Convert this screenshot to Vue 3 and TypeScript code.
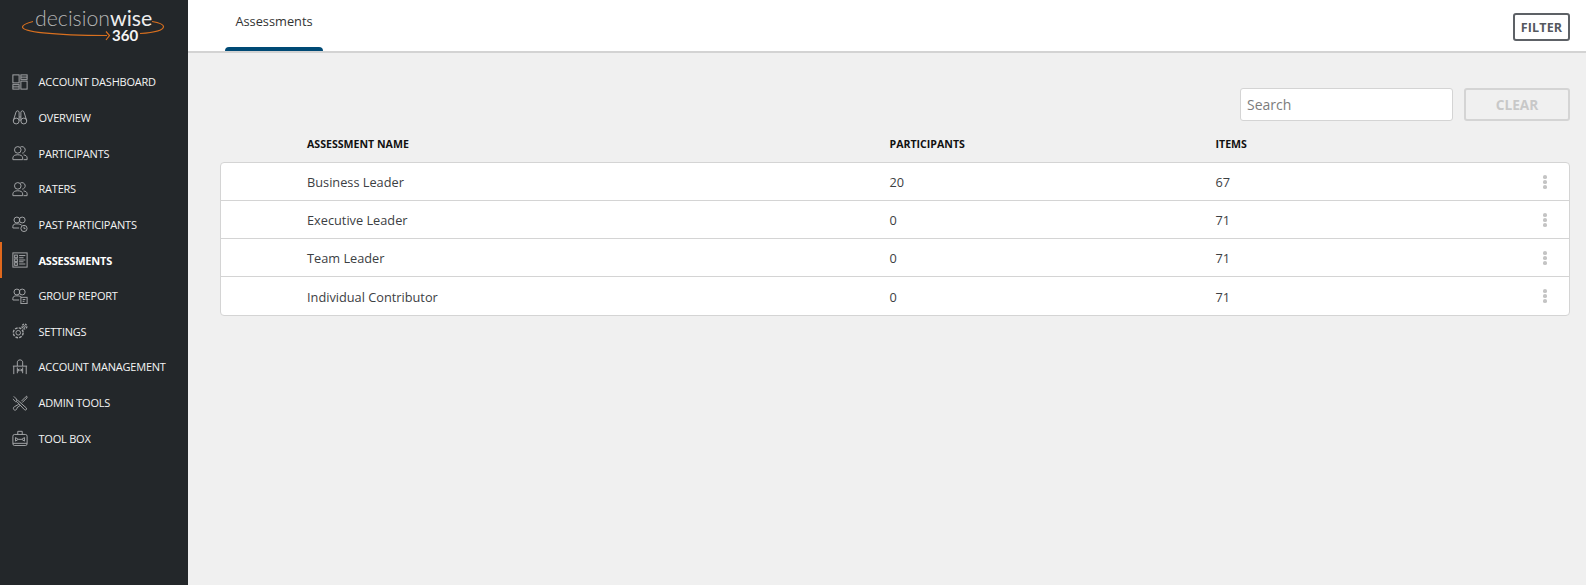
<script setup lang="ts">
interface NavItem { label: string; icon: string; active?: boolean }
const nav: NavItem[] = [
  { label: 'ACCOUNT DASHBOARD', icon: 'dash' },
  { label: 'OVERVIEW', icon: 'binoc' },
  { label: 'PARTICIPANTS', icon: 'people' },
  { label: 'RATERS', icon: 'people' },
  { label: 'PAST PARTICIPANTS', icon: 'past' },
  { label: 'ASSESSMENTS', icon: 'assess', active: true },
  { label: 'GROUP REPORT', icon: 'group' },
  { label: 'SETTINGS', icon: 'gear' },
  { label: 'ACCOUNT MANAGEMENT', icon: 'manage' },
  { label: 'ADMIN TOOLS', icon: 'tools' },
  { label: 'TOOL BOX', icon: 'box' },
]
const rows = [
  { name: 'Business Leader', participants: 20, items: 67 },
  { name: 'Executive Leader', participants: 0, items: 71 },
  { name: 'Team Leader', participants: 0, items: 71 },
  { name: 'Individual Contributor', participants: 0, items: 71 },
]
</script>

<template>
  <div class="app">
    <aside class="side">
      <svg class="logo" width="188" height="44" viewBox="0 0 188 44">
        <path d="M33 21.500C27 23 22.500 24.500 22.500 27C22.500 31.500 50 35.500 107 35.500" fill="none" stroke="#d9701f" stroke-width="1.200" />
        <path d="M106 31.500L109.500 35.500L106 40" fill="none" stroke="#d9701f" stroke-width="1.200" />
        <path d="M140 33.500C155 32.500 163.500 30 163.500 26.500C163.500 24.500 158 22.500 152 21.500" fill="none" stroke="#d9701f" stroke-width="1.200" />
        <text x="35" y="26" class="logo-a">decision<tspan class="logo-b">wise</tspan></text>
        <text x="112" y="41" class="logo-c">360</text>
      </svg>
      <nav class="nav">
        <a v-for="n in nav" :key="n.label" class="nav-item" :class="{ active: n.active }">
          <svg class="ico" width="16" height="16" viewBox="0 0 18 18">
            <g v-if="n.icon === 'dash'">
              <rect x="1" y="1" width="7" height="9" /><rect x="10" y="1" width="7" height="5" /><rect x="10" y="8" width="7" height="9" /><rect x="1" y="12" width="7" height="5" />
              <path d="M1 14.500h7M10 3.500h7" />
            </g>
            <g v-else-if="n.icon === 'binoc'">
              <circle cx="4.700" cy="13.500" r="3.300" /><circle cx="13.300" cy="13.500" r="3.300" />
              <path d="M1.500 13L4.500 3.500C5 1.500 7.500 1.500 8 3.500V12M16.500 13L13.500 3.500C13 1.500 10.500 1.500 10 3.500V12M8 9h2M8 12.500h2" />
            </g>
            <g v-else-if="n.icon === 'people'">
              <circle cx="6.500" cy="5.500" r="3.700" /><path d="M1 16.500V14.500C1 12 3.500 11 6.500 11S12 12 12 14.500V16.500Z" />
              <path d="M9.500 2.200A3.700 3.700 0 1 1 11.500 9.200M13 11.200C15.500 11.500 17 12.500 17 14.500V16.500H13" />
            </g>
            <g v-else-if="n.icon === 'past'">
              <circle cx="5.500" cy="4.500" r="3.300" /><circle cx="11.500" cy="4.500" r="3.300" />
              <path d="M1 13.500V11.500C1 9.500 3 8.800 5.500 8.800S10 9.500 11 10.500M1 13.500H8" />
              <circle cx="13.500" cy="14" r="3.500" /><path d="M13.500 12v2.200h1.700" />
            </g>
            <g v-else-if="n.icon === 'assess'">
              <rect x="1" y="1" width="16" height="16" />
              <rect x="3" y="3.500" width="3" height="3" /><rect x="3" y="7.800" width="3" height="3" /><rect x="3" y="12" width="3" height="3" />
              <path d="M8 4h7M8 6.500h5M8 9h7M8 11h5M8 13.500h7" />
            </g>
            <g v-else-if="n.icon === 'group'">
              <circle cx="5.500" cy="4.500" r="3.300" /><circle cx="11.500" cy="4.500" r="3.300" />
              <path d="M1 13.500V11.500C1 9.500 3 8.800 5.500 8.800S10 9.500 10.500 10M1 13.500H8" />
              <rect x="10" y="10.500" width="7" height="7" /><path d="M12 13h3M12 15h2" />
            </g>
            <g v-else-if="n.icon === 'gear'">
              <circle cx="7" cy="11" r="5.500" stroke-dasharray="3 1.300" stroke-width="1.600" /><circle cx="7" cy="11" r="2.600" />
              <circle cx="14" cy="4" r="2.700" stroke-dasharray="2 1" stroke-width="1.500" /><circle cx="14" cy="4" r="1" />
            </g>
            <g v-else-if="n.icon === 'manage'">
              <path d="M1 8H17M2 8V17M16 8V17M6 8V3.500C6 2 7.500 1 9 1S12 2 12 3.500V8M6 9.500V16M12 9.500V16M6 12.500H12M8 11L6.500 12.500L8 14M10 11L11.500 12.500L10 14" />
            </g>
            <g v-else-if="n.icon === 'tools'">
              <path d="M2 1.500L5 4.500V6L6.500 6L16 14.500C17.200 16 15.500 17.800 14 16.500L5.500 7.500H4L1 4.500" />
              <path d="M10.500 7L15 2.500L16.500 1.200L17 3.200L15.500 4.500L11.500 8.500" />
              <path d="M7.500 10.500L3 13C1.200 13.500 1 16.500 3 17C5 17.300 5.800 15.500 5.500 14.500L9 11.800" />
            </g>
            <g v-else>
              <rect x="1" y="5" width="16" height="12.500" rx="2" />
              <path d="M6.500 5V1.500H11.500V5" />
              <path d="M4 8.500L7 10.500L4 12.500ZM14 8.500L11 10.500L14 12.500ZM7 10.500H11M1 15H17" />
            </g>
          </svg>
          <span class="nav-label">{{ n.label }}</span>
        </a>
      </nav>
    </aside>
    <main class="main">
      <header class="top">
        <div class="tab">Assessments</div>
        <button class="filter" type="button">FILTER</button>
      </header>
      <section class="content">
        <div class="tools">
          <input class="search" placeholder="Search" />
          <button class="clear" type="button" disabled>CLEAR</button>
        </div>
        <div class="head grid">
          <div>ASSESSMENT NAME</div>
          <div>PARTICIPANTS</div>
          <div>ITEMS</div>
        </div>
        <div class="card">
          <div v-for="r in rows" :key="r.name" class="row grid">
            <div>{{ r.name }}</div>
            <div>{{ r.participants }}</div>
            <div>{{ r.items }}</div>
            <span class="more"><i></i><i></i><i></i></span>
          </div>
        </div>
      </section>
    </main>
  </div>
</template>

<style>
html, body { margin: 0; background: #f0f0f0; }
</style>

<style scoped>
.app {
  display: flex;
  width: 1586px;
  height: 585px;
  overflow: hidden;
  font-family: "Open Sans", sans-serif;
  background: #f0f0f0;
}
.side {
  width: 188px;
  flex: none;
  background: #23272a;
}
.logo { display: block; margin-bottom: 20px; }
.logo-a { font-family: Lato, sans-serif; font-weight: 300; font-size: 21.300px; fill: #b4b4b4; }
.logo-b { font-weight: 400; fill: #eeeeee; }
.logo-c { font-family: Lato, sans-serif; font-weight: 700; font-size: 15px; fill: #f5f5f5; }
.nav { display: flex; flex-direction: column; }
.nav-item {
  display: flex;
  align-items: center;
  height: 35.650px;
  color: #f4f4f4;
  font-size: 11px;
  letter-spacing: -0.220px;
  box-sizing: border-box;
  border-left: 2px solid transparent;
  padding-left: 10px;
}
.nav-item.active { border-left-color: #e0681d; font-weight: 700; color: #fff; }
.ico { flex: none; fill: none; stroke: #a4a6a8; stroke-width: 1.100; margin-right: 10.500px; }
.main { flex: 1; min-width: 0; display: flex; flex-direction: column; }
.top {
  height: 51px;
  background: #fff;
  border-bottom: 2px solid #d3d3d3;
  display: flex;
  justify-content: space-between;
  align-items: flex-start;
  padding: 0 16px 0 37px;
}
.tab {
  position: relative;
  width: 98px;
  height: 51px;
  box-sizing: border-box;
  padding-top: 12px;
  text-align: center;
  font-size: 12.800px;
  line-height: 18px;
  color: #333;
}
.tab::after {
  content: "";
  position: absolute;
  left: 0;
  right: 0;
  bottom: 0;
  height: 4px;
  border-radius: 5px 5px 0 0;
  background: #004a75;
}
.filter {
  margin-top: 13px;
  width: 57px;
  height: 28px;
  padding: 0;
  background: #fff;
  border: 2px solid #5d6166;
  border-radius: 3px;
  font: 700 12.500px "Open Sans", sans-serif;
  color: #55595e;
  letter-spacing: 0.150px;
}
.content { flex: 1; padding: 35px 16px 0 32px; }
.tools { display: flex; justify-content: flex-end; gap: 11px; }
.search {
  width: 213px;
  height: 33px;
  box-sizing: border-box;
  padding: 0 6px;
  border: 1px solid #d4d4d4;
  border-radius: 3px;
  background: #fff;
  font: 14px "Open Sans", sans-serif;
  outline: none;
}
.search::placeholder { color: #7c7c7c; opacity: 1; }
.clear {
  width: 106px;
  height: 33px;
  padding: 0;
  background: #f0f0f0;
  border: 2px solid #d4d4d4;
  border-radius: 3px;
  font: 700 13.700px "Open Sans", sans-serif;
  color: #c8c8c8;
}
.grid {
  display: grid;
  grid-template-columns: 582.500px 326px 1fr;
  padding-left: 86px;
}
.head {
  height: 41px;
  box-sizing: border-box;
  padding-left: 87px;
  padding-top: 4px;
  align-items: center;
  font-size: 10.600px;
  font-weight: 700;
  color: #111;
}
.card {
  box-sizing: border-box;
  background: #fff;
  border: 1px solid #d4d4d4;
  border-radius: 4px;
}
.row {
  position: relative;
  height: 38px;
  box-sizing: border-box;
  align-items: center;
  font-size: 12.750px;
  color: #3c4043;
  border-bottom: 1px solid #d4d4d4;
}
.row:last-child { border-bottom: 0; padding-top: 2px; }
.more {
  position: absolute;
  right: 22px;
  top: 12px;
  display: flex;
  flex-direction: column;
  gap: 1.500px;
}
.more i { display: block; width: 4.500px; height: 3.500px; border-radius: 50%; background: #c4c4c4; }
</style>
